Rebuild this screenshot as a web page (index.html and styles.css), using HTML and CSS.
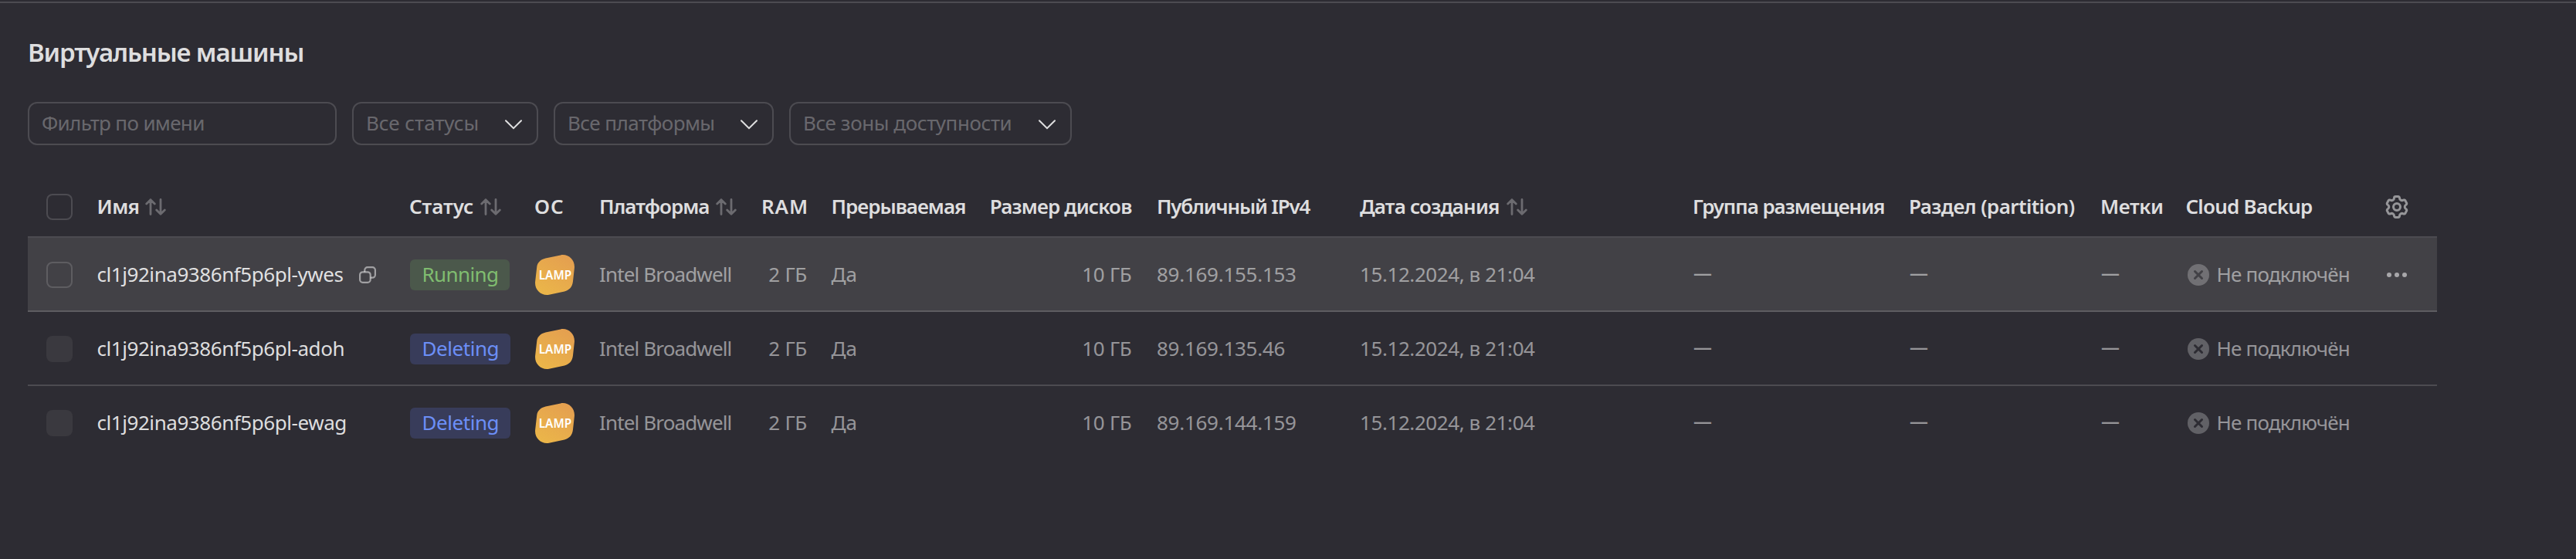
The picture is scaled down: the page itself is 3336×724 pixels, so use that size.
FILE: index.html
```html
<!DOCTYPE html>
<html lang="ru">
<head>
<meta charset="utf-8">
<title>Виртуальные машины</title>
<link rel="stylesheet" href="styles.css">
</head>
<body>
<svg class="defs" width="0" height="0" aria-hidden="true">
  <defs>
    <linearGradient id="lamp-fill" x1="0.2" y1="1" x2="0.8" y2="0">
      <stop offset="0" stop-color="#ebb649"/>
      <stop offset="1" stop-color="#e49f50"/>
    </linearGradient>
    <symbol id="i-sort" viewBox="0 0 27 22">
      <path d="M7 20.5V1.7M1.7 7 7 1.7l5.3 5.3M20 1.5v18.8M14.7 15l5.3 5.3 5.3-5.3"/>
    </symbol>
    <symbol id="i-chevron" viewBox="0 0 22 13">
      <path d="M1 1.2 11 11.2 21 1.2"/>
    </symbol>
    <symbol id="i-lamp" viewBox="0 0 51 52">
      <path fill="url(#lamp-fill)" d="M13.5 4.6 33 .4C43-1.5 51.8 6.500 50.900 17L48.900 35C48.200 41.500 44 46 38 47.500L18 51.700C8 53.400-.8 45.500.1 35L2.300 15.500C3 10 7.500 6 13.500 4.600Z"/>
      <text class="lamp-text" x="4.700" y="31.700" textLength="42.500" lengthAdjust="spacingAndGlyphs">LAMP</text>
    </symbol>
    <symbol id="i-off" viewBox="0 0 28 28">
      <circle cx="14" cy="14" r="14" fill="#fff" fill-opacity=".25"/>
      <path class="cross" d="m9.500 9.500 9 9m0-9-9 9"/>
    </symbol>
  </defs>
</svg>

<main class="page">
  <h1 class="title">Виртуальные машины</h1>

  <div class="filters">
    <div class="control control-name"><span>Фильтр по имени</span></div>
    <div class="control control-status"><span>Все статусы</span><svg class="chevron"><use href="#i-chevron"/></svg></div>
    <div class="control control-platform"><span>Все платформы</span><svg class="chevron"><use href="#i-chevron"/></svg></div>
    <div class="control control-zone"><span>Все зоны доступности</span><svg class="chevron"><use href="#i-chevron"/></svg></div>
  </div>

  <div class="table">
    <div class="row head">
      <div class="check-cell"><i class="check"></i></div>
      <div class="h-name">Имя<svg class="sort"><use href="#i-sort"/></svg></div>
      <div class="h-status">Статус<svg class="sort"><use href="#i-sort"/></svg></div>
      <div class="h-os">ОС</div>
      <div class="h-platform">Платформа<svg class="sort"><use href="#i-sort"/></svg></div>
      <div class="h-ram end">RAM</div>
      <div class="h-preempt">Прерываемая</div>
      <div class="h-disk end">Размер дисков</div>
      <div class="h-ip">Публичный IPv4</div>
      <div class="h-date">Дата создания<svg class="sort"><use href="#i-sort"/></svg></div>
      <div class="h-group">Группа размещения</div>
      <div class="h-partition">Раздел (partition)</div>
      <div class="h-labels">Метки</div>
      <div class="h-backup">Cloud Backup</div>
      <div class="actions">
        <svg class="gear" viewBox="-8 -8 16 16"><path d="M-1.75-5.800A.95.95 0 0 1-.8-6.750L.8-6.750A.95.95 0 0 1 1.750-5.800A1.600 1.600 0 0 0 4.148-4.416A.95.95 0 0 1 5.446-4.068L6.246-2.682A.95.95 0 0 1 5.898-1.384A1.600 1.600 0 0 0 5.898 1.384A.95.95 0 0 1 6.246 2.682L5.446 4.068A.95.95 0 0 1 4.148 4.416A1.600 1.600 0 0 0 1.750 5.800A.95.95 0 0 1 .8 6.750L-.8 6.750A.95.95 0 0 1-1.750 5.800A1.600 1.600 0 0 0-4.148 4.416A.95.95 0 0 1-5.446 4.068L-6.246 2.682A.95.95 0 0 1-5.898 1.384A1.600 1.600 0 0 0-5.898-1.384A.95.95 0 0 1-6.246-2.682L-5.446-4.068A.95.95 0 0 1-4.148-4.416A1.600 1.600 0 0 0-1.750-5.800Z"/><circle r="2.250"/></svg>
      </div>
    </div>

    <div class="row hovered">
      <div class="check-cell"><i class="check"></i></div>
      <div class="name">cl1j92ina9386nf5p6pl-ywes<svg class="copy" viewBox="0 0 22 22"><rect x="1.100" y="7.300" width="13.600" height="13.600" rx="3.600"/><path d="M7.300 7.300V4.700a3.600 3.600 0 0 1 3.600-3.600h6.400a3.600 3.600 0 0 1 3.600 3.600v6.400a3.600 3.600 0 0 1-3.600 3.600h-2.600"/></svg></div>
      <div><span class="badge running">Running</span></div>
      <div><svg class="lamp"><use href="#i-lamp"/></svg></div>
      <div class="platform">Intel Broadwell</div>
      <div class="ram end">2 ГБ</div>
      <div>Да</div>
      <div class="disk end">10 ГБ</div>
      <div class="ip">89.169.155.153</div>
      <div class="date">15.12.2024, в 21:04</div>
      <div class="dash">—</div>
      <div class="dash">—</div>
      <div class="dash">—</div>
      <div class="backup"><svg class="off"><use href="#i-off"/></svg>Не подключён</div>
      <div class="actions"><svg class="dots" viewBox="0 0 26 6"><circle cx="3" cy="3" r="3"/><circle cx="13" cy="3" r="3"/><circle cx="23" cy="3" r="3"/></svg></div>
    </div>

    <div class="row">
      <div class="check-cell"><i class="check disabled"></i></div>
      <div class="name">cl1j92ina9386nf5p6pl-adoh</div>
      <div><span class="badge deleting">Deleting</span></div>
      <div><svg class="lamp"><use href="#i-lamp"/></svg></div>
      <div class="platform">Intel Broadwell</div>
      <div class="ram end">2 ГБ</div>
      <div>Да</div>
      <div class="disk end">10 ГБ</div>
      <div class="ip">89.169.135.46</div>
      <div class="date">15.12.2024, в 21:04</div>
      <div class="dash">—</div>
      <div class="dash">—</div>
      <div class="dash">—</div>
      <div class="backup"><svg class="off"><use href="#i-off"/></svg>Не подключён</div>
      <div class="actions"></div>
    </div>

    <div class="row last">
      <div class="check-cell"><i class="check disabled"></i></div>
      <div class="name">cl1j92ina9386nf5p6pl-ewag</div>
      <div><span class="badge deleting">Deleting</span></div>
      <div><svg class="lamp"><use href="#i-lamp"/></svg></div>
      <div class="platform">Intel Broadwell</div>
      <div class="ram end">2 ГБ</div>
      <div>Да</div>
      <div class="disk end">10 ГБ</div>
      <div class="ip">89.169.144.159</div>
      <div class="date">15.12.2024, в 21:04</div>
      <div class="dash">—</div>
      <div class="dash">—</div>
      <div class="dash">—</div>
      <div class="backup"><svg class="off"><use href="#i-off"/></svg>Не подключён</div>
      <div class="actions"></div>
    </div>
  </div>
</main>
</body>
</html>
```
FILE: styles.css
```css
:root {
  --bg: #2d2c33;
  --row-bg: #2d2c33;
  --line: rgba(255, 255, 255, 0.15);
  --text: rgba(255, 255, 255, 0.85);
  --text-secondary: rgba(255, 255, 255, 0.5);
  --text-hint: rgba(255, 255, 255, 0.3);
}

* { box-sizing: border-box; }

body {
  margin: 0;
  height: 724px;
  overflow: hidden;
  background: var(--bg);
  color: var(--text);
  font: 400 26px/36px "Noto Sans", sans-serif;
}

svg { flex: none; display: block; }
.defs { position: absolute; }

.page {
  height: 722px;
  margin-top: 2px;
  border-top: 2px solid var(--line);
  padding: 40px 36px 0;
}

.title {
  margin: 0;
  font-size: 33px;
  line-height: 48px;
  font-weight: 600;
  letter-spacing: -1.12px;
}

/* Filters */
.filters {
  display: flex;
  gap: 20px;
  margin-top: 40px;
}

.control {
  display: flex;
  align-items: center;
  justify-content: space-between;
  height: 56px;
  padding: 0 19px 2px 16px;
  border: 2px solid var(--line);
  border-radius: 12px;
  color: var(--text-hint);
  white-space: nowrap;
}

.control-name { width: 400px; letter-spacing: -0.65px; }
.control-status { width: 241px; letter-spacing: -0.05px; }
.control-platform { width: 285px; letter-spacing: -0.55px; }
.control-zone { width: 366px; letter-spacing: -0.42px; }

.chevron {
  width: 22px;
  height: 13px;
  margin-top: 4px;
  fill: none;
  stroke: #e0e0e1;
  stroke-width: 2;
  stroke-linecap: round;
}

/* Table */
.table { width: 3120px; margin-top: 40px; }

.row {
  display: grid;
  grid-template-columns: 89.5px 404.5px 162px 84px 194.5px 106px 194px 227.5px 263px 431px 280px 248px 110.5px 229px 96.5px;
  height: 96px;
  border-bottom: 2px solid var(--line);
  color: var(--text-secondary);
  white-space: nowrap;
}

.row > div { display: flex; align-items: center; }
.row > .end { justify-content: flex-end; padding-right: 31.5px; }
.row > .disk, .row > .h-disk { padding-right: 32.5px; }
.row > .h-ram { padding-right: 29.5px; }

.head { height: 80px; color: var(--text); font-weight: 600; }
.last { border-bottom-color: transparent; }
.hovered { --row-bg: #424146; background: var(--row-bg); }

.check {
  width: 34px;
  height: 34px;
  margin: 2px 0 0 24px;
  border: 2px solid var(--line);
  border-radius: 8px;
}
.check.disabled { border: 0; background: #3a393f; }

.sort {
  width: 27px;
  height: 22px;
  margin: 2px 0 0 9px;
  fill: none;
  stroke: rgba(255, 255, 255, 0.3);
  stroke-width: 2.8;
  stroke-linecap: round;
  stroke-linejoin: round;
}

.h-name { letter-spacing: -0.6px; }
.h-name .sort { margin-left: 8px; }
.h-status { letter-spacing: -0.1px; }
.h-os { letter-spacing: 1px; }
.h-platform { letter-spacing: -1px; }
.h-ram { letter-spacing: 0.9px; }
.h-preempt { letter-spacing: -1px; }
.h-disk { letter-spacing: -0.85px; }
.h-ip { letter-spacing: -1.2px; }
.h-date { letter-spacing: -0.85px; }
.h-group { letter-spacing: -1.06px; }
.h-partition { letter-spacing: -0.6px; }
.h-labels { letter-spacing: -0.4px; }
.h-backup { letter-spacing: -0.76px; }

.name { color: var(--text); letter-spacing: -0.44px; }
.platform { letter-spacing: -0.86px; }
.ram, .disk { letter-spacing: -0.3px; }
.ip { letter-spacing: -0.27px; }
.date { letter-spacing: -0.42px; }
.backup { letter-spacing: -0.82px; }
.row > .dash { padding: 0 0 4px 1px; font-size: 24px; font-weight: 600; }

.copy {
  width: 22px;
  height: 22px;
  margin: 2px 0 0 20.5px;
  fill: none;
  stroke: var(--text-secondary);
  stroke-width: 2.2;
}

.badge {
  width: 130px;
  height: 40px;
  margin: 2px 0 0 1px;
  padding: 0 0 0 15.5px;
  border-radius: 6px;
  line-height: 38px;
}
.running { width: 129px; background: #4b584b; color: #80bd70; letter-spacing: -0.6px; }
.deleting { background: #383c5a; color: #6c8ff7; letter-spacing: -0.45px; }

.lamp { width: 51px; height: 52px; margin: 2px 0 0 1px; }
.lamp-text { fill: #fff; font: 600 15.4px "Noto Sans", sans-serif; letter-spacing: 0; }

.off { width: 28px; height: 28px; margin: 2px 10px 0 2px; }
.cross { fill: none; stroke: var(--row-bg); stroke-width: 3; stroke-linecap: round; }

.row > .actions { justify-content: center; padding-right: 8px; }
.gear {
  width: 32px;
  height: 32px;
  margin-top: 2px;
  fill: none;
  stroke: var(--text-secondary);
  stroke-width: 1.5;
}
.dots { width: 26px; height: 6px; margin-top: 2px; fill: #a8a7aa; }
```
